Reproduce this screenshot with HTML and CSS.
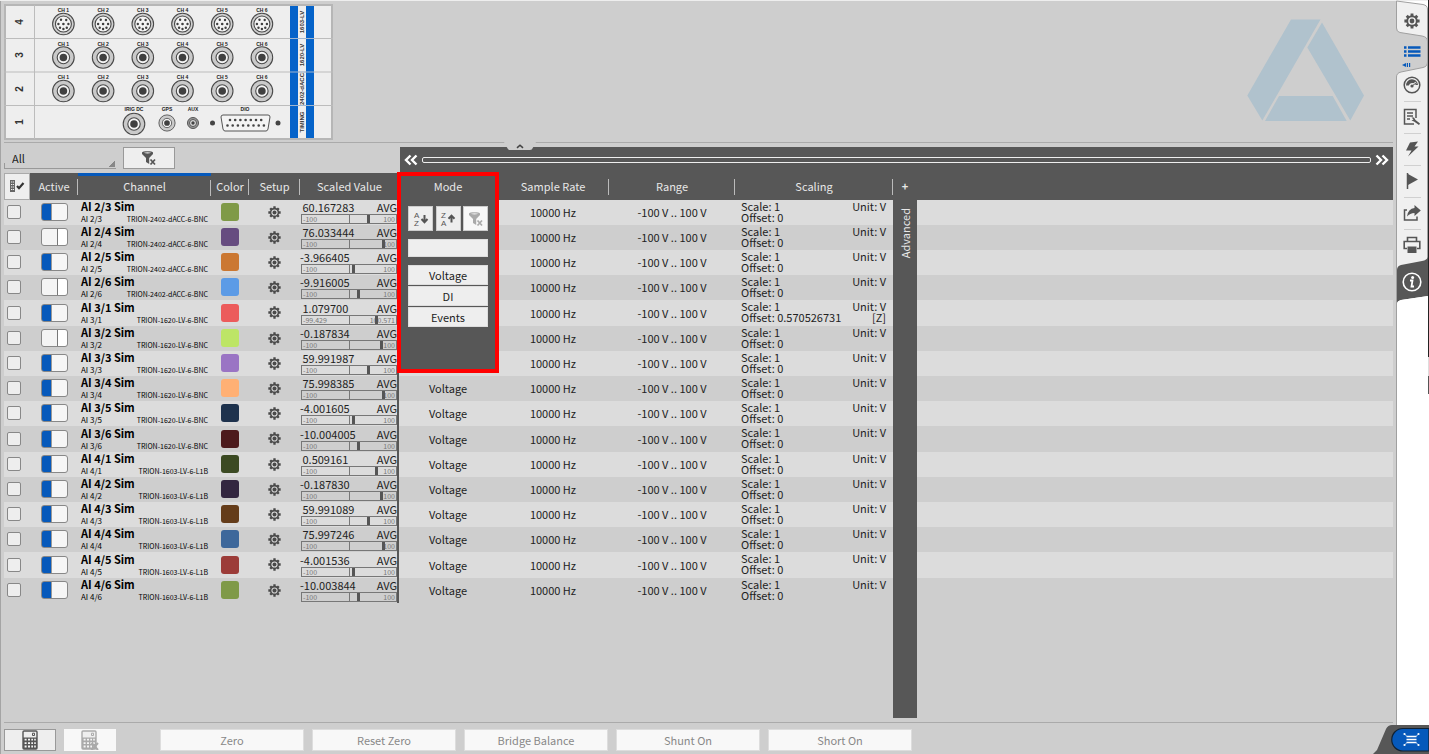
FILE: index.html
```html
<!DOCTYPE html>
<html lang="en">
<head>
<meta charset="utf-8">
<title>Channel List</title>
<link rel="stylesheet" href="styles.css">
</head>
<body>
<svg class="defs" aria-hidden="true">
  <defs>
    <symbol id="bnc" viewBox="-12 -12 24 24">
      <circle r="10.8" fill="#cacaca" stroke="#4a4a4a" stroke-width="1.100"/>
      <circle r="6.2" fill="#f4f4f4" stroke="#4a4a4a" stroke-width="1.100"/>
      <circle r="3.8" fill="#404040"/>
    </symbol>
    <symbol id="multi" viewBox="-12 -12 24 24">
      <circle r="10.8" fill="#d0d0d0" stroke="#4a4a4a" stroke-width="1.100"/>
      <circle r="8" fill="#f4f4f4" stroke="#4a4a4a" stroke-width="1.100"/>
      <g fill="#404040"><circle r="1.3"/><circle cx="-5" r="1.2"/><circle cx="5" r="1.2"/><circle cx="-2.4" cy="-4.3" r="1.2"/><circle cx="2.800" cy="-4" r="1.2"/><circle cx="-3.400" cy="3.800" r="1.2"/><circle cx="3.400" cy="3.800" r="1.2"/><circle cx="0" cy="5" r="1.2"/></g>
    </symbol>
    <symbol id="gear" viewBox="-10 -10 20 20">
      <circle r="6" fill="none" stroke="currentColor" stroke-width="2.400"/>
      <circle r="3" fill="currentColor"/>
      <g stroke="currentColor" stroke-width="3.600"><path d="M0-9.500V-6M0 9.500V6M-9.500 0H-6M9.500 0H6M-6.600-6.600-4.400-4.400M6.600 6.600 4.400 4.400M6.600-6.600 4.400-4.400M-6.600 6.600-4.400 4.400"/></g>
    </symbol>
    <symbol id="funnel" viewBox="0 0 16 16">
      <path d="M1 2.500C1 .8 12 .8 12 2.500V4L8.200 8V14L5 12V8L1 4Z" fill="currentColor"/>
      <path d="M2.800 2.700C5 2 8 2 10.200 2.700 8 3.600 5 3.600 2.800 2.700" fill="#eee"/>
      <path d="M9.500 9.500 14 14.500M14 9.500 9.500 14.500" stroke="currentColor" stroke-width="1.700"/>
    </symbol>
    <symbol id="calc" viewBox="0 0 16 20">
      <rect x="1" y="1" width="14" height="18" rx="1" fill="#eee" stroke="currentColor" stroke-width="1.400"/>
      <path d="M1 7.500H15V19H1Z" fill="currentColor"/>
      <path d="M10.500 3.200H12.500V5.500H10.500Z" fill="none" stroke="currentColor"/>
      <path d="M2.600 8.800H4.600V10.600H2.600ZM6 8.800H8V10.600H6ZM9.300 8.800H11V10.600H9.300ZM12.200 8.800H13.800V10.600H12.200ZM2.600 12.200H4.600V14H2.600ZM6 12.200H8V14H6ZM9.300 12.200H11V14H9.300ZM12.200 12.200H13.800V14H12.200ZM2.600 15.600H4.600V17.400H2.600ZM6 15.600H8V17.400H6ZM9.300 15.600H11V17.400H9.300ZM12.200 15.600H13.800V17.400H12.200Z" fill="#f4f4f4"/>
    </symbol>
  </defs>
</svg>

<div class="app">
  <main class="main">
    <header class="top">
      <svg class="rack" viewBox="0 0 330 137" role="img" aria-label="Hardware rack">
        <rect x="1" y="1" width="327" height="134" fill="#eee" stroke="#b6b6b6" stroke-width="2"/>
        <path d="M0 34.500H329M0 68H329M0 101.500H329M30.500 1V135" stroke="#bcbcbc"/>
        <path d="M286 2H294V134H286ZM302 2H310V134H302Z" fill="#0563c9"/>
        <path d="M286 34.500H310M286 68H310M286 101.500H310" stroke="#9fb6d0" stroke-width="1"/>
        <g class="slot-no">
          <text transform="translate(19 18) rotate(-90)">4</text>
          <text transform="translate(19 51) rotate(-90)">3</text>
          <text transform="translate(19 85) rotate(-90)">2</text>
          <text transform="translate(19 118) rotate(-90)">1</text>
        </g>
        <g class="card">
          <text transform="translate(300 18) rotate(-90)">1603-LV</text>
          <text transform="translate(300 51) rotate(-90)">1620-LV</text>
          <text transform="translate(300 85) rotate(-90)">2402-dACC</text>
          <text transform="translate(300 118) rotate(-90)">TIMING</text>
        </g>
        <g class="ports" id="ports"></g>
        <g class="ports">
          <text x="130" y="107">IRIG DC</text><text x="163" y="107">GPS</text><text x="189" y="107">AUX</text><text x="241" y="107">DIO</text>
          <use href="#bnc" x="118" y="108" width="24" height="24"/>
          <use href="#bnc" x="154" y="110" width="18" height="18"/>
          <circle cx="189" cy="119" r="5.500" fill="#999" stroke="#555"/><circle cx="189" cy="119" r="3.500" fill="#ddd" stroke="#555"/><circle cx="189" cy="119" r="1.700" fill="#444"/>
          <circle cx="208.500" cy="119" r="2.500" fill="#444"/><circle cx="274" cy="119" r="2.500" fill="#444"/>
          <path d="M219 111H264Q266 111 266 113L264 125Q263.500 127 262 127H221Q219.500 127 219 125L217 113Q217 111 219 111Z" fill="#f4f4f4" stroke="#555"/>
          <path d="M226 116H260" stroke="#444" stroke-width="2.600" stroke-linecap="round" stroke-dasharray="0 5.200"/>
          <path d="M223.500 121.500H262" stroke="#444" stroke-width="2.600" stroke-linecap="round" stroke-dasharray="0 5.200"/>
        </g>
      </svg>
      <svg class="logo" viewBox="0 0 118 103" role="img" aria-label="Logo">
        <path d="M44 .5H73.500L15.300 101.500 .3 76.500ZM75 3.500 117 76.500 103.300 101.500 60.300 28.500ZM32 77H85.700L99.700 102H18Z" fill="#b0c2cd"/>
      </svg>
    </header>

    <section class="panel">
      <div class="toolbar">
        <div class="filters">
          <select class="group" aria-label="Channel group"><option>All</option></select>
          <button class="box-btn clear" aria-label="Clear filter"><svg width="16" height="16"><use href="#funnel"/></svg></button>
        </div>
        <div class="scroller">
          <button class="fold" aria-label="Collapse rack"><svg width="32" height="8" viewBox="0 0 32 8"><path d="M0 0H32L29 5.500Q28 8 26 8H6Q4 8 3 5.500Z" fill="#cecece"/><path d="M13 5.800 16 3.200 19 5.800" fill="none" stroke="#444" stroke-width="1.600"/></svg></button>
          <button class="jump" aria-label="Scroll left"><svg width="14" height="12" viewBox="0 0 14 12"><path d="M6.500 1.500 2 6 6.500 10.500M12.500 1.500 8 6 12.500 10.500" fill="none" stroke="#fff" stroke-width="2.400"/></svg></button>
          <input class="track" type="range" aria-label="Horizontal position">
          <button class="jump" aria-label="Scroll right"><svg width="14" height="12" viewBox="0 0 14 12"><path d="M1.500 1.500 6 6 1.500 10.500M7.500 1.500 12 6 7.500 10.500" fill="none" stroke="#fff" stroke-width="2.400"/></svg></button>
        </div>
      </div>

      <div class="sheet">
        <table class="channels">
          <colgroup><col class="w-check"><col class="w-active"><col class="w-channel"><col class="w-color"><col class="w-setup"><col class="w-value"><col class="w-mode"><col class="w-rate"><col class="w-range"><col class="w-scaling"><col class="w-adv"><col></colgroup>
          <thead>
            <tr>
              <th class="pick"><button class="plain" aria-label="Select channels"><svg width="16" height="14" viewBox="0 0 16 14"><path d="M1 1H6V13H1Z" fill="#666"/><path d="M2 3H5M2 5.500H5M2 8H5M2 10.500H5" stroke="#eee" stroke-dasharray="1.200 .6"/><path d="M8 7 10 9.200 14.500 4" fill="none" stroke="#333" stroke-width="2.200"/></svg></button></th>
              <th class="sep">Active</th>
              <th class="sep sorted">Channel</th>
              <th class="sep">Color</th>
              <th class="sep">Setup</th>
              <th>Scaled Value</th>
              <th class="mode">Mode
                <div class="menu">
                  <div class="sorts">
                    <button class="tool" aria-label="Sort ascending"><svg width="18" height="16" viewBox="0 0 18 16"><text x="2" y="7">A</text><text x="2" y="15">Z</text><path d="M12.500 4V11M9.500 8 12.500 11.200 15.500 8" fill="none" stroke="#555" stroke-width="2"/></svg></button>
                    <button class="tool" aria-label="Sort descending"><svg width="18" height="16" viewBox="0 0 18 16"><text x="2" y="7">Z</text><text x="2" y="15">A</text><path d="M12.500 11.500V5M9.500 7.800 12.500 4.600 15.500 7.800" fill="none" stroke="#555" stroke-width="2"/></svg></button>
                    <button class="tool off" disabled aria-label="Clear column filter"><svg width="16" height="16"><use href="#funnel"/></svg></button>
                  </div>
                  <input class="search" type="text" aria-label="Filter mode">
                  <div class="options">
                    <button class="option">Voltage</button>
                    <button class="option">DI</button>
                    <button class="option">Events</button>
                  </div>
                </div>
                <div class="frame"></div>
              </th>
              <th class="sep">Sample Rate</th>
              <th class="sep">Range</th>
              <th class="sep">Scaling</th>
              <th><button class="plain plus" aria-label="Add column">+</button></th>
              <th></th>
            </tr>
          </thead>
          <tbody id="rows"></tbody>
        </table>
      </div>
    </section>

    <footer class="actions">
      <button class="box-btn calc" aria-label="Calculator"><svg width="16" height="20"><use href="#calc"/></svg></button>
      <button class="calc-off" disabled aria-label="Remove calculation"><svg width="18" height="20" viewBox="0 0 18 20"><use href="#calc" width="16" height="20"/><path d="M10.500 13 17 20M17 13 10.500 20" stroke="#aaa" stroke-width="2"/></svg></button>
      <div class="commands">
        <button disabled>Zero</button>
        <button disabled>Reset Zero</button>
        <button disabled>Bridge Balance</button>
        <button disabled>Shunt On</button>
        <button disabled>Short On</button>
      </div>
    </footer>
  </main>

  <nav class="side" aria-label="Sections">
    <svg class="tabs" width="33" height="400" viewBox="0 0 33 400" aria-hidden="true">
      <path d="M.5 1 27 4.500Q31.500 5.500 31.500 9V290H.5Z" fill="#f0f0f0"/>
      <path d="M0 29Q.5 32 4 32.500L26 36Q31.500 37 31.500 41V62Q31.500 66.500 27 67.500L5 72Q.5 73 .5 77L0 78Z" fill="#cecece"/>
      <path d="M.5 1 27 4.500Q31.500 5.500 31.500 9V300M.5 1V28Q.5 32 4 32.500L26 36Q31.500 37 31.500 41V62Q31.500 66.500 27 67.500L5 72Q.5 73 .5 77V400" fill="none" stroke="#a0a0a0"/>
      <path d="M1 270Q1 266 5 265L26 261Q31 260 32 257V296L5 300Q1 301 1 304Z" fill="#575757"/>
      <path d="M1 304Q1 301 5 300L32 296V310H1Z" fill="#fff"/>
      <path d="M32 0H33V357H32Z" fill="#222"/><path d="M32 357H33V376H32Z" fill="#ddd"/><path d="M32 376H33V394H32Z" fill="#555"/>
    </svg>
    <div class="icons">
      <button aria-label="Settings"><svg width="16" height="16"><use href="#gear"/></svg></button>
      <button class="current" aria-label="Channel list"><svg width="20" height="28" viewBox="0 0 20 28"><path d="M2 8.500H4.500M6 8.500H18.500M2 12.500H4.500M6 12.500H18.500M2 16.500H4.500M6 16.500H18.500" stroke="currentColor" stroke-width="2.400"/><path d="M0 26 4 24V28ZM4.800 24H6V28H4.800ZM7 24H8.200V28H7Z" fill="currentColor"/></svg></button>
      <button aria-label="Gauge"><svg width="18" height="18" viewBox="0 0 18 18"><circle cx="9" cy="9" r="7.800" fill="none" stroke="currentColor" stroke-width="1.500"/><path d="M3 9.500A6 6 0 0 1 15 9L12.500 9A3.600 3.600 0 0 0 5.800 9.500Z" fill="currentColor"/><path d="M8.500 10.500 13 6.500" stroke="#f0f0f0" stroke-width="2"/><circle cx="9" cy="10" r="1.600" fill="currentColor"/><path d="M9 10 13 7" stroke="currentColor"/></svg></button>
      <button aria-label="Report"><svg width="18" height="18" viewBox="0 0 18 18"><path d="M13 10V1.500H1.500V16H11" fill="none" stroke="currentColor" stroke-width="1.500"/><path d="M4 5H10M4 8H10M4 11H7" stroke="currentColor" stroke-width="1.400"/><path d="M8.500 9.500 11 9.500 12.500 12 17 15.500 16 17 11 13.500 8.500 12.500 10.500 11.500Z" fill="currentColor"/></svg></button>
      <button aria-label="Trigger"><svg width="16" height="16" viewBox="0 0 16 16"><path d="M6 1.500 14 .5 10.500 5.500 14.500 5.500 4 15.500 7.500 9.500H2Z" fill="currentColor"/></svg></button>
      <button aria-label="Events"><svg width="16" height="18" viewBox="0 0 16 18"><path d="M3.500 1V17" stroke="currentColor" stroke-width="1.500"/><path d="M4 2 14 7.500 4 13Z" fill="currentColor"/></svg></button>
      <button aria-label="Export"><svg width="18" height="18" viewBox="0 0 18 18"><path d="M4 6H1.500V16H14V12.500" fill="none" stroke="currentColor" stroke-width="1.500"/><path d="M11.500 1 17.800 6.500 11.500 12V9Q7 9 4 12.500 5 4.500 11.500 4Z" fill="currentColor"/></svg></button>
      <button aria-label="Print"><svg width="18" height="18" viewBox="0 0 18 18"><path d="M4.500 5.500V1.500H13.500V5.500M4 12.500H1.200V5.500H16.800V12.500H14" fill="none" stroke="currentColor" stroke-width="1.600"/><path d="M4.500 10.500H13.500V17H4.500Z" fill="currentColor"/></svg></button>
      <button class="info" aria-label="Information"><svg width="20" height="20" viewBox="0 0 20 20"><circle cx="10" cy="10" r="8.800" fill="none" stroke="#fff" stroke-width="1.600"/><circle cx="10.600" cy="5.500" r="1.500" fill="#fff"/><path d="M8 8.500H10.500L9.500 14.500H12" fill="none" stroke="#fff" stroke-width="1.800"/></svg></button>
    </div>
  </nav>
  <button class="corner" aria-label="Overview">
    <svg width="56" height="30" viewBox="0 0 56 30"><path d="M0 30 4 26 13 5Q15 1 19 1H56V30Z" fill="#575757"/><path d="M56 4.500H30A11 11 0 0 0 30 27H56Z" fill="#0659bb" stroke="#123" stroke-width="1.200"/><path d="M33.500 12.500H43.500M33.500 15.500H43.500M33.500 18.500H43.500" stroke="#fff" stroke-width="1.600"/><path d="M31.500 10 34 12.500M45.500 10 43 12.500M31.500 21 34 18.500M45.500 21 43 18.500" stroke="#cfe0f5" stroke-width=".8"/><g fill="#fff"><circle cx="31.500" cy="10" r="1.100"/><circle cx="45.500" cy="10" r="1.100"/><circle cx="31.500" cy="21" r="1.100"/><circle cx="45.500" cy="21" r="1.100"/></g></svg>
  </button>
</div>
<script src="app.js"></script>
</body>
</html>
```
FILE: app.js
```js
const modules = { 2: "TRION-2402-dACC-6-BNC", 3: "TRION-1620-LV-6-BNC", 4: "TRION-1603-LV-6-L1B" };

// id, enabled, colour, value, marker position in percent
const channels = [
  ["2/3", true, "#7f9a48", " 60.167283", 69],
  ["2/4", false, "#664c80", " 76.033444", 85],
  ["2/5", true, "#cb7832", "-3.966405", 53],
  ["2/6", false, "#5c9be6", "-9.916005", 59],
  ["3/1", true, "#ec5b5b", " 1.079700", 78],
  ["3/2", false, "#bde566", "-0.187834", 83],
  ["3/3", true, "#9a74c4", " 59.991987", 69],
  ["3/4", true, "#ffb074", " 75.998385", 85],
  ["3/5", true, "#1e324d", "-4.001605", 53],
  ["3/6", true, "#4c1a1c", "-10.004005", 59],
  ["4/1", true, "#3b4a22", " 0.509161", 78],
  ["4/2", true, "#332640", "-0.187830", 83],
  ["4/3", true, "#643c19", " 59.991089", 69],
  ["4/4", true, "#3e689b", " 75.997246", 85],
  ["4/5", true, "#9c3c39", "-4.001536", 53],
  ["4/6", true, "#7f9a48", "-10.003844", 59]
];

const advanced = `<td class="advanced" rowspan="${channels.length + 1}"><span>Advanced</span></td>`;

document.getElementById("rows").innerHTML = channels.map(([id, on, color, value, mark], i) => {
  const shifted = id === "3/1";
  return `<tr class="row">
    <td><input class="tick" type="checkbox" aria-label="Select AI ${id}"></td>
    <td><input class="toggle" type="checkbox" aria-label="Activate AI ${id}"${on ? " checked" : ""}></td>
    <td class="c-channel"><div class="name">AI ${id} Sim</div><div class="meta"><span class="port">AI ${id}</span><span>${modules[id[0]]}</span></div></td>
    <td><button class="swatch" aria-label="Color of AI ${id}" style="background:${color}"></button></td>
    <td><button class="plain setup" aria-label="Set up AI ${id}"><svg width="13" height="13"><use href="#gear"/></svg></button></td>
    <td class="c-value"><div class="reading"><span>${value}</span><span>AVG</span></div>
      <div class="bar"><span>${shifted ? "-99.429" : "-100"}</span><span>${shifted ? "100.571" : "100"}</span><i class="mark" style="left:${mark}%"></i></div></td>
    <td class="mid">${i < 7 ? "" : "Voltage"}</td>
    <td class="mid">10000 Hz</td>
    <td class="mid">-100 V .. 100 V</td>
    <td class="c-scaling"><div><span>Scale: 1</span><span>Unit: V</span></div><div><span>Offset: ${shifted ? "0.570526731" : "0"}</span><span>${shifted ? "[Z]" : ""}</span></div></td>
    ${i === 0 ? advanced : ""}<td></td>
  </tr>`;
}).join("") + '<tr><td colspan="10"></td><td></td></tr>';

const ports = [];
[["#multi", 20], ["#bnc", 53.5], ["#bnc", 87]].forEach(([symbol, y]) => {
  for (let n = 0; n < 6; n++) {
    const x = 59.4 + n * 39.7;
    ports.push(`<text x="${x}" y="${y - 12}">CH ${n + 1}</text><use href="${symbol}" x="${x - 12}" y="${y - 12}" width="24" height="24"/>`);
  }
});
document.getElementById("ports").innerHTML = ports.join("");
```
FILE: styles.css
```css
* { box-sizing: border-box; }
body {
  margin: 0;
  background: #cecece;
  color: #222;
  font: 11px/12px "Noto Sans CJK SC", "Noto Sans", sans-serif;
}
button, input, select { font: inherit; color: inherit; margin: 0; padding: 0; border: 0; }
button { display: flex; align-items: center; justify-content: center; background: none; }
svg { display: block; }
.defs { position: absolute; width: 0; height: 0; }

.app { position: relative; display: flex; min-height: 100vh; border-top: 1px solid #eee; }
.main {
  flex: 1;
  display: flex;
  flex-direction: column;
  padding: 0 3px;
  border-left: 1px solid #a4a4a4;
}

.top {
  display: flex;
  justify-content: space-between;
  padding: 3px 28px 1px 0;
  border-bottom: 1px solid #aaa;
}
.rack { width: 330px; height: 137px; }
.logo { width: 118px; height: 103px; margin-top: 15px; }
.rack text { font-family: "Liberation Sans", sans-serif; font-weight: bold; fill: #333; text-anchor: middle; }
.slot-no text { font-size: 10px; }
.card text { font-size: 6px; }
.ports text { font-size: 5px; fill: #222; }

.panel { flex: 1; display: flex; flex-direction: column; padding-top: 4px; }
.toolbar { display: flex; height: 26px; }
.filters { display: flex; gap: 7px; width: 396px; }
.group {
  appearance: none;
  width: 112px;
  height: 22px;
  padding-left: 7px;
  border: solid #999;
  border-width: 0 0 1px 1px;
  border-image: linear-gradient(transparent 75%, #999 75%) 1;
  border-radius: 0;
  background: linear-gradient(135deg, transparent 50%, #888 50%) right 1px bottom 1px / 7px 7px no-repeat;
}
.box-btn { width: 52px; height: 22px; background: #eee; border: 1px solid #999; color: #555; }

.scroller { position: relative; flex: 1; display: flex; align-items: center; gap: 4px; padding: 0 4px; background: #575757; }
.fold { position: absolute; top: -5px; left: 104px; }
.track {
  appearance: none;
  flex: 1;
  min-width: 0;
  height: 6px;
  border: 1px solid #eee;
  border-radius: 2px;
  background: transparent;
}
.track::-webkit-slider-thumb { appearance: none; width: 100%; height: 4px; background: transparent; }

.sheet { flex: 1; display: flex; }
.channels { width: 100%; table-layout: fixed; border-collapse: separate; border-spacing: 0; }
.w-check { width: 26px; } .w-active { width: 48px; } .w-channel { width: 133px; }
.w-color { width: 38px; } .w-setup { width: 51px; } .w-value { width: 99px; }
.w-mode { width: 98px; } .w-rate { width: 112px; } .w-range { width: 126px; }
.w-scaling { width: 158px; } .w-adv { width: 24px; }
.channels td, .channels th { padding: 0; }

.channels th { height: 27px; padding-bottom: 2px; background: #575757; color: #e8e8e8; font-weight: normal; }
.channels .pick { background: #eee; border: 1px solid #aaa; color: #444; }
.plain { width: 100%; }
.channels .sep {
  background: linear-gradient(#bbb, #bbb) right center / 1px 16px no-repeat #575757;
}
.channels .sorted { border-top: 3px solid #0659bb; padding-bottom: 5px; }
.channels .mode { position: relative; }
.plus { font-weight: bold; }

.menu {
  position: absolute;
  top: 100%;
  left: 0;
  width: 100%;
  height: 172px;
  padding: 6px 9px;
  background: #575757;
  color: #222;
  display: flex;
  flex-direction: column;
  gap: 8px;
}
.frame { position: absolute; top: -1px; left: -2px; right: -2px; height: 201px; border: 4px solid #f00; }
.sorts { display: flex; justify-content: space-between; }
.tool { width: 25px; height: 25px; background: #eee; border: 1px solid #ccc; color: #555; }
.tool text { font: 8px "Liberation Sans", sans-serif; fill: #555; }
.tool.off { background: #f8f8f8; color: #aaa; }
.search { width: 100%; height: 18px; background: #eee; border: 1px solid #ddd; }
.options { display: flex; flex-direction: column; gap: 1px; }
.option { height: 20px; background: #eee; border: 1px solid #ddd; }

.channels .row td { height: 25px; padding-bottom: 1px; }
.channels .row:nth-child(5n) td { height: 26px; }
.row:nth-child(odd) td { background: #dcdcdc; }
.channels td { vertical-align: middle; }
.tick { appearance: none; display: block; width: 14px; height: 14px; margin-left: 3px; background: #eee; border: 1px solid #888; border-radius: 2px; }
.toggle {
  appearance: none;
  display: block;
  width: 27px;
  height: 18px;
  margin-left: 11px;
  border: 1px solid #888;
  border-radius: 3px;
  background: linear-gradient(90deg, #f4f4f4 15px, #777 15px 16px, #fff 16px);
}
.toggle:checked { background: linear-gradient(90deg, #0659bb 9px, #999 9px 10px, #f6f6f6 10px); }
.channels .row .c-channel { padding: 0 3px; }
.name { font-weight: bold; color: #000; line-height: 13px; }
.meta { display: flex; justify-content: space-between; font-size: 7px; line-height: 12px; color: #000; }
.port { font-size: 8px; }
.swatch { width: 18px; height: 18px; margin-left: 10px; border-radius: 3px; }
.setup { color: #4a4a4a; }
.row .c-value { border-right: 2px solid #575757; }
.reading { display: flex; justify-content: space-between; white-space: pre; line-height: 14px; }
.bar {
  position: relative;
  display: flex;
  justify-content: space-between;
  height: 10px;
  margin-left: 1px;
  padding: 0 1px;
  border: 1px solid #777;
  color: #777;
  font-size: 7px;
  line-height: 9px;
  background: linear-gradient(#777, #777) center / 1px 100% no-repeat;
}
.mark { position: absolute; top: 0; bottom: 0; width: 3px; background: #555; }
.mid { text-align: center; }
.channels .row .c-scaling { padding: 0 7px 2px 6px; }
.c-scaling div { display: flex; justify-content: space-between; line-height: 11px; }
.channels .row .advanced { background: #575757; color: #e8e8e8; vertical-align: top; }
.advanced span { display: block; margin: 8px 6px; line-height: 12px; writing-mode: vertical-rl; transform: rotate(180deg); }

.actions {
  display: flex;
  align-items: center;
  gap: 8px;
  height: 32px;
  margin-top: 4px;
  padding-top: 3px;
  border-top: 1px solid #aaa;
}
.actions button { height: 22px; }
.calc-off { width: 52px; background: #f8f8f8; color: #aaa; }
.commands { display: flex; gap: 8px; padding-left: 36px; }
.commands button { width: 144px; background: #f8f8f8; color: #888; border: 1px solid #ddd; }

.side { position: relative; width: 33px; background: #fff; border-left: 1px solid #a0a0a0; }
.tabs { position: absolute; top: -1px; left: -1px; }
.icons { position: relative; display: flex; flex-direction: column; padding: 4px 2px 0 0; }
.icons button { height: 32px; color: #555; }
.icons button:nth-child(n+4):nth-child(-n+8) {
  background: linear-gradient(#d0d0d0, #d0d0d0) center top / 17px 1px no-repeat;
}
.icons .current { color: #0659bb; }
.icons .info { height: 42px; }
.corner { position: absolute; right: 0; bottom: 0; }
```
